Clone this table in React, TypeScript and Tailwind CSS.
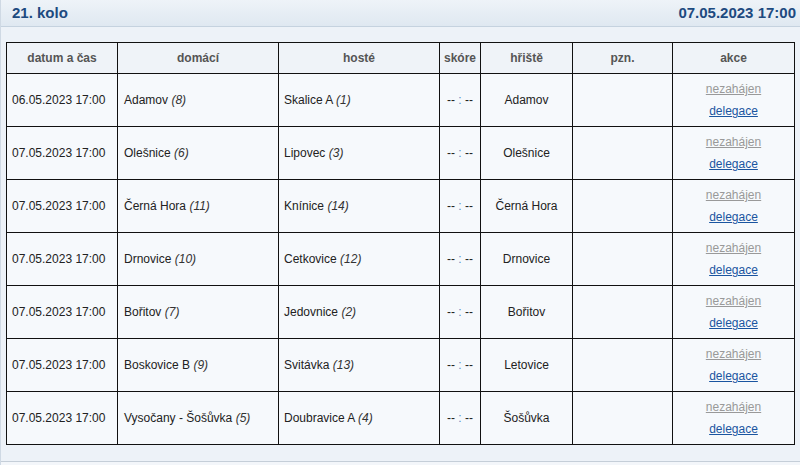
import React from 'react';

type Match = {
  date: string;
  home: string;
  homeRank: number;
  away: string;
  awayRank: number;
  venue: string;
};

const matches: Match[] = [
  { date: '06.05.2023 17:00', home: 'Adamov', homeRank: 8, away: 'Skalice A', awayRank: 1, venue: 'Adamov' },
  { date: '07.05.2023 17:00', home: 'Olešnice', homeRank: 6, away: 'Lipovec', awayRank: 3, venue: 'Olešnice' },
  { date: '07.05.2023 17:00', home: 'Černá Hora', homeRank: 11, away: 'Knínice', awayRank: 14, venue: 'Černá Hora' },
  { date: '07.05.2023 17:00', home: 'Drnovice', homeRank: 10, away: 'Cetkovice', awayRank: 12, venue: 'Drnovice' },
  { date: '07.05.2023 17:00', home: 'Bořitov', homeRank: 7, away: 'Jedovnice', awayRank: 2, venue: 'Bořitov' },
  { date: '07.05.2023 17:00', home: 'Boskovice B', homeRank: 9, away: 'Svitávka', awayRank: 13, venue: 'Letovice' },
  { date: '07.05.2023 17:00', home: 'Vysočany - Šošůvka', homeRank: 5, away: 'Doubravice A', awayRank: 4, venue: 'Šošůvka' },
];

const cell = 'border border-[#111] text-[12px] text-[#222]';

export default function App() {
  return (
    <div className="w-[800px] h-[465px] bg-[#edf2f8] border-l border-[#cfd9e4] flex flex-col font-['Liberation_Sans',Arial,sans-serif]">
      <div className="h-[27px] flex items-center justify-between pl-[11px] pr-[4px] bg-gradient-to-b from-[#eef3f8] to-[#dfe8f1] border-b border-[#c5d2df]">
        <span className="text-[15px] font-bold text-[#1d4a80]">21. kolo</span>
        <span className="text-[15px] font-bold text-[#1d4a80]">07.05.2023 17:00</span>
      </div>

      <div className="pt-[15px] pl-[5px]">
        <table className="table-fixed border-collapse w-[788px] bg-[#f6f9fc]">
          <colgroup>
            <col className="w-[111px]" />
            <col className="w-[161px]" />
            <col className="w-[161px]" />
            <col className="w-[41px]" />
            <col className="w-[92px]" />
            <col className="w-[100px]" />
            <col className="w-[122px]" />
          </colgroup>
          <thead>
            <tr className="h-[31px] bg-[#eff3f8]">
              {['datum a čas', 'domácí', 'hosté', 'skóre', 'hřiště', 'pzn.', 'akce'].map((h) => (
                <th key={h} className={`${cell} font-bold !text-[#555] text-center px-0`}>
                  {h}
                </th>
              ))}
            </tr>
          </thead>
          <tbody>
            {matches.map((m, i) => (
              <tr key={i} className="h-[53px]">
                <td className={`${cell} pl-[5px]`}>{m.date}</td>
                <td className={`${cell} pl-[6px]`}>
                  {m.home} <i className="text-[#333]">({m.homeRank})</i>
                </td>
                <td className={`${cell} pl-[5px]`}>
                  {m.away} <i className="text-[#333]">({m.awayRank})</i>
                </td>
                <td className={`${cell} text-center`}>
                  -- <span className="text-[#5b8fc7]">:</span> --
                </td>
                <td className={`${cell} text-center`}>{m.venue}</td>
                <td className={cell}></td>
                <td className={`${cell} text-center`}>
                  <div className="flex flex-col items-center gap-[4px]">
                    <span className="underline text-[#999]">nezahájen</span>
                    <span className="underline text-[#1a55a0]">delegace</span>
                  </div>
                </td>
              </tr>
            ))}
          </tbody>
        </table>
      </div>

      <div className="mt-auto h-[4px] border-t border-[#c5ced8] bg-[#f3f6fa]" />
    </div>
  );
}
